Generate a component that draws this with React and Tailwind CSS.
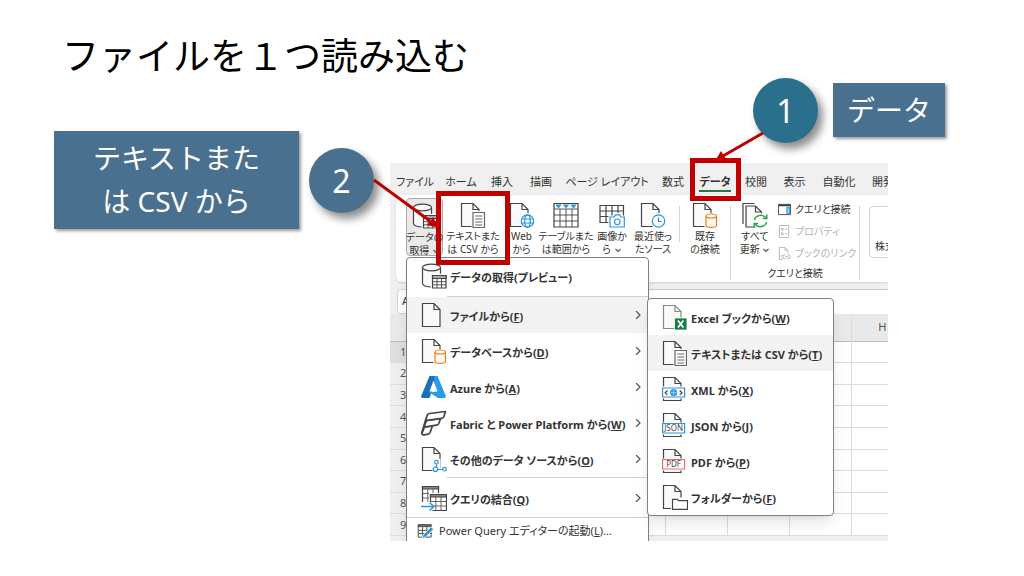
const tabs = ['ファイル', 'ホーム', '挿入', '描画', 'ページ レイアウト', '数式', 'データ', '校閲', '表示', '自動化', '開発'];
// columns behind the open menus carry no letter
const columns = ['', '', '', '', '', '', '', 'H'];
const rows = [1, 2, 3, 4, 5, 6, 7, 8, 9];

function Icon({ children, small }) {
  return (
    <svg
      viewBox="0 0 26 26"
      className={small ? 'size-4 shrink-0' : 'size-[26px] shrink-0'}
      fill="none"
      stroke="#444"
      strokeWidth="1.2"
      aria-hidden="true"
    >
      {children}
    </svg>
  );
}

function Page({ stroke = '#444' }) {
  return <path d="M1.500 1.500h11.500l6 6v17h-17.500zM13 1.500v6h6" fill="#fafafa" stroke={stroke} />;
}

function PageIcon() {
  return <Icon><Page /></Icon>;
}

function CylinderIcon() {
  return (
    <Icon>
      <path d="M1.500 4.500v16c0 2 4 3.500 9 3.500s9-1.500 9-3.500v-16" fill="#fafafa" />
      <ellipse cx="10.500" cy="4.500" rx="9" ry="3.300" fill="#fafafa" />
      <path d="M11.500 12.500h13.500v12.500h-13.500z" fill="#fff" stroke="#fff" strokeWidth="3.500" />
      <path d="M11.500 12.500h13.500v12.500h-13.500z" fill="#fff" />
      <path d="M11.500 12.500h13.500v3h-13.500z" fill="#aaa" />
      <path d="M16 15.500v9.500M20.500 15.500v9.500M11.500 18.700h13.500M11.500 21.800h13.500" strokeWidth=".9" />
    </Icon>
  );
}

function TextIcon() {
  return (
    <Icon>
      <Page />
      <path d="M13 10.500h11.500v15h-11.500z" fill="#fff" stroke="#fff" strokeWidth="3" />
      <path d="M13 10.500h11.500v15h-11.500z" fill="#fff" stroke="#666" />
      <path d="M15.300 14h7M15.300 17h7M15.300 20h7M15.300 23h7" stroke="#666" strokeWidth="1" />
    </Icon>
  );
}

function WebIcon() {
  return (
    <Icon>
      <Page />
      <circle cx="18.500" cy="19" r="7.500" fill="#fff" stroke="#fff" />
      <g stroke="#2b95dd">
        <circle cx="18.500" cy="19" r="6.200" fill="#fff" />
        <ellipse cx="18.500" cy="19" rx="2.800" ry="6.200" />
        <path d="M12.500 17h12M12.500 21h12" />
      </g>
    </Icon>
  );
}

function TableIcon() {
  return (
    <Icon>
      <path d="M1 1.500h24v23.500h-24z" fill="#fff" />
      <path d="M1 7h24M1 13h24M1 19h24M7 7v18M13 7v18M19 7v18" strokeWidth=".9" />
      <path d="M3.500 3h4l-2 2.500zM11 3h4l-2 2.500zM18.500 3h4l-2 2.500z" fill="#2b95dd" stroke="#2b95dd" />
    </Icon>
  );
}

function CameraIcon() {
  return (
    <Icon>
      <path d="M1 3.500h23.500v17h-23.500zM1 9h23.500M1 14.500h23.500M7 3.500v17M13 3.500v17M19 3.500v17" />
      <path d="M11 15h4l2-2.500h3l2 2.500h3.500v10.500h-14.500z" fill="#fff" stroke="#fff" strokeWidth="3" />
      <path d="M11 15h4l1.500-2.200h4l1.500 2.200h3.300v10h-14.300z" fill="#fff" stroke="#2b95dd" />
      <circle cx="18.300" cy="19.800" r="2.800" stroke="#2b95dd" />
    </Icon>
  );
}

function ClockIcon() {
  return (
    <Icon>
      <Page />
      <circle cx="18.500" cy="19" r="7.500" fill="#fff" stroke="#fff" />
      <circle cx="18.500" cy="19" r="6.200" fill="#fff" stroke="#2b95dd" />
      <path d="M18.500 15.500v4h3" stroke="#2b7cb8" />
    </Icon>
  );
}

function DatabaseIcon() {
  return (
    <Icon>
      <Page />
      <path d="M12.500 11h13v15h-13z" fill="#fff" stroke="none" />
      <path d="M14 14v9.500c0 2.500 10.500 2.500 10.500 0v-9.500" fill="#fff7ef" stroke="#e8811a" />
      <ellipse cx="19.250" cy="14" rx="5.250" ry="2" fill="#fff" stroke="#e8811a" />
    </Icon>
  );
}

function RefreshIcon() {
  return (
    <Icon>
      <path d="M1 22v-20.500h11.500" />
      <path d="M4 4h9.500l6 6v15h-15.500zM13.500 4v6h6" fill="#fafafa" />
      <circle cx="18.500" cy="19" r="8" fill="#fff" stroke="none" />
      <path d="M12.500 18c.8-5 8.500-6.500 11.500-1.800M24.800 12.500v4h-4M24.500 20c-.8 5-8.500 6.500-11.500 1.800M12.200 25.500v-4h4" stroke="#2ba84f" strokeWidth="1.500" />
    </Icon>
  );
}

function AzureIcon() {
  return (
    <Icon>
      <path d="M8.500 2h8l-8 22h-6.500q-2.500 0-1.700-2.200z" fill="#1c6fba" stroke="none" />
      <path d="M13 2h3.500l8.300 20q.6 2-1.500 2h-6.300l-9.500-6.300h7z" fill="#2a9be6" stroke="none" />
      <path d="M12.500 6.500l4 11h-8z" fill="#fff" stroke="none" />
    </Icon>
  );
}

function FabricIcon() {
  return (
    <Icon>
      <g strokeWidth="1.700" strokeLinejoin="round" fill="#fff">
        <path d="M3.500 17l8-1.200-2.300 6.500q-.6 1.500-2 1.800l-4.200.7q-2.500.2-2-1.700z" />
        <path d="M5.500 10.400l14-1.700-1.700 4.800q-.6 1.500-2.300 1.700l-12.500 2z" />
        <path d="M8.500 3.500l16-2-1.700 5.200q-.6 1.500-2.300 1.700l-16 2.200 1.600-5.200q.6-1.600 2.400-1.900z" />
        <path d="M4.500 10.600l-4 13" />
      </g>
    </Icon>
  );
}

function OtherSourcesIcon() {
  return (
    <Icon>
      <Page />
      <path d="M11.500 13h8v9h6v4h-14z" fill="#fff" stroke="none" />
      <g stroke="#2b95dd" fill="#fff">
        <path d="M15.500 18v3M17 23.500h5" />
        <circle cx="15.500" cy="16.200" r="1.800" />
        <circle cx="14.500" cy="23.200" r="2.200" />
        <circle cx="23.500" cy="23.200" r="1.800" />
      </g>
    </Icon>
  );
}

function CombineIcon() {
  return (
    <Icon>
      <path d="M1.500 1.500h16v16h-16z" fill="#fff" />
      <path d="M1.500 1.500h16v2.500h-16z" fill="#888" />
      <path d="M6.800 4v13M12 4v13M1.500 8.500h16M1.500 13h16" strokeWidth=".8" />
      <path d="M9.500 9.500h16v16h-16z" fill="#fff" stroke="#fff" strokeWidth="3" />
      <path d="M9.500 9.500h16v16h-16z" fill="#fff" />
      <path d="M9.500 9.500h16v2.500h-16z" fill="#888" />
      <path d="M14.800 12v13M20 12v13M9.500 16.500h16M9.500 21h16" strokeWidth=".8" />
      <path d="M0 17h12l2 4.500-3 4.500h-11z" fill="#fff" stroke="none" />
      <path d="M0 21.500h12.500M8.500 17.500l4.500 4-4.500 4" stroke="#2b95dd" strokeWidth="1.500" />
    </Icon>
  );
}

function QueryEditorIcon() {
  return (
    <Icon small>
      <path d="M2 3h21v20h-21zM2 12h21M2 17h21M9 7v16M16 7v16" strokeWidth="1.500" />
      <path d="M2 3h21v3h-21z" fill="#777" strokeWidth="1.500" />
      <path d="M8 26l2-7 13-13 4 4-13 13z" fill="#2b95dd" stroke="#fff" strokeWidth="1.500" />
    </Icon>
  );
}

function ExcelIcon() {
  return (
    <Icon>
      <Page stroke="#888" />
      <path d="M12.500 14h12.500v12h-12.500z" fill="#12803f" stroke="#fff" strokeWidth=".8" />
      <path d="M16 16.500l5.400 7M21.400 16.500l-5.400 7" stroke="#fff" strokeWidth="1.800" />
    </Icon>
  );
}

function XmlIcon() {
  return (
    <Icon>
      <Page />
      <path d="M0 10.500h22v12h-22z" fill="#fff" stroke="none" />
      <path d="M.6 12h22v9h-22z" fill="#fff" stroke="#2b95dd" />
      <path d="M5.500 14.500l-2.300 2.200 2.300 2.200M17.700 14.500l2.300 2.200-2.300 2.200" />
      <circle cx="11.600" cy="16.600" r="3" fill="#2b95dd" stroke="#2b95dd" />
      <path d="M8.600 16.600h6M11.600 13.600v6" stroke="#bfe0f7" strokeWidth=".7" />
    </Icon>
  );
}

function LabelledPage({ label, color }) {
  return (
    <Icon>
      <Page />
      <path d="M0 10.500h22v12h-22z" fill="#fff" stroke="none" />
      <path d="M.6 11.500h22v9.500h-22z" fill="#fff" stroke={color} />
      <text x="11.600" y="19.200" textAnchor="middle" fontSize="8" fill="#444" stroke="none" className="font-['Noto_Sans',sans-serif] font-normal">
        {label}
      </text>
    </Icon>
  );
}

function FolderIcon() {
  return (
    <Icon>
      <Page />
      <path d="M9 13.500h17v12.500h-17z" fill="#fff" stroke="none" />
      <path d="M10.500 25.400v-10h5l1 1.300h9v8.700z" fill="#fff" />
    </Icon>
  );
}

function Chevron({ down }) {
  return (
    <svg viewBox="0 0 8 8" className="inline size-2 shrink-0" fill="none" stroke="#555" strokeWidth="1.200" aria-hidden="true">
      <path d={down ? 'M1.500 3l2.500 2.500 2.500-2.500' : 'M2 0l4 4-4 4'} />
    </svg>
  );
}

function RibbonButton({ icon, lines, arrow, className }) {
  return (
    <button type="button" className={`flex shrink-0 flex-col items-center gap-[2px] whitespace-nowrap pt-1 leading-[13px] ${className}`}>
      {icon}
      <span>
        {lines[0]}
        <br />
        {lines[1]}
        {arrow && <> <Chevron down /></>}
      </span>
    </button>
  );
}

function SideCommand({ label, disabled, children }) {
  return (
    <button type="button" disabled={disabled} className="flex h-[22px] items-center gap-1 whitespace-nowrap disabled:text-[#b4b4b4]">
      <svg viewBox="0 0 14 14" className="size-[13px] shrink-0" fill="none" stroke={disabled ? '#b4b4b4' : '#444'} aria-hidden="true">
        {children}
      </svg>
      {label}
    </button>
  );
}

function MenuItem({ icon, label, accessKey, active, arrow }) {
  return (
    <button
      type="button"
      role="menuitem"
      className={`flex h-9 w-full items-center gap-[3px] whitespace-nowrap pl-[14px] pr-[6px] font-bold ${active ? 'bg-[#f3f3f3]' : ''}`}
    >
      {icon}
      <span className="grow pt-1 text-left">
        {label}
        {accessKey && <>(<u>{accessKey}</u>)</>}
      </span>
      {arrow && <Chevron />}
    </button>
  );
}

function Separator({ className = '' }) {
  return <span className={`w-px shrink-0 bg-[#d4d4d4] ${className}`} />;
}

function Ribbon() {
  return (
    <div className="ml-[6px] flex h-[87px] items-start rounded-bl-md bg-white pl-[10px] pt-[3px] text-[10px] shadow-sm">
      <RibbonButton className="h-[58px] w-[37px] rounded-sm border border-[#aaa] bg-[#e9e9e9]" icon={<CylinderIcon />} lines={['データの', '取得']} arrow />
      <RibbonButton className="w-[60px]" icon={<TextIcon />} lines={['テキストまた', 'は CSV から']} />
      <RibbonButton className="w-[37px]" icon={<WebIcon />} lines={['Web', 'から']} />
      <RibbonButton className="w-[52px]" icon={<TableIcon />} lines={['テーブルまた', 'は範囲から']} />
      <RibbonButton className="w-10" icon={<CameraIcon />} lines={['画像か', 'ら']} arrow />
      <RibbonButton className="w-[42px]" icon={<ClockIcon />} lines={['最近使っ', 'たソース']} />
      <Separator className="mx-[5px] mt-2 h-9" />
      <RibbonButton className="w-10" icon={<DatabaseIcon />} lines={['既存', 'の接続']} />
      <Separator className="mx-[5px] mt-2 h-[74px]" />
      <div className="w-[118px] shrink-0">
        <div className="flex gap-1">
          <RibbonButton className="w-[38px]" icon={<RefreshIcon />} lines={['すべて', '更新']} arrow />
          <div>
            <SideCommand label="クエリと接続">
              <path d="M.5 1.500h13v11h-13z" />
              <path d="M.5 2.500h13" strokeWidth="2" />
              <path d="M9.500 4.500h3v7h-3z" fill="#8ecbf3" stroke="#2b95dd" />
            </SideCommand>
            <SideCommand label="プロパティ" disabled>
              <path d="M1.500.5h10v13h-10zM3.500 3.500h2v2h-2zM3.500 8.500h2v2h-2zM7.500 4.500h2.500M7.500 9.500h2.500" />
            </SideCommand>
            <SideCommand label="ブックのリンク" disabled>
              <path d="M5 13.500h-3.500v-13h6l3 3v3M7.500.5v3h3" />
              <path d="M3 9.500h3M8 8.500h-1a2 2 0 0 0 0 4h1M10 8.500h1.500a2 2 0 0 1 0 4h-1.500M7.500 10.500h4" />
            </SideCommand>
          </div>
        </div>
        <p className="text-center leading-[18px]">クエリと接続</p>
      </div>
      <Separator className="mx-[5px] mt-2 h-[74px]" />
      <button type="button" className="ml-1 mt-2 flex h-[52px] w-24 shrink-0 items-end rounded-sm border border-[#d4d4d4] pb-1 pl-[5px] leading-[14px]">
        株式
      </button>
    </div>
  );
}

function Sheet() {
  return (
    <table className="h-[222px] w-[523px] table-fixed border-collapse text-[11px] leading-4 text-[#555]">
      <colgroup>
        <col className="w-[27px]" />
        {columns.map((name, i) => <col key={i} className="w-[62px]" />)}
      </colgroup>
      <thead>
        <tr className="h-[27px] border-b border-[#bbb] bg-[#e9e9e9]">
          <th />
          {columns.map((name, i) => (
            <th key={i} className="border-l border-[#ddd] p-0 font-normal">{name}</th>
          ))}
        </tr>
      </thead>
      <tbody>
        {rows.map((row) => (
          <tr key={row} className="border-b border-[#dcdcdc]">
            <th className={row === 1 ? 'bg-[#dedede] p-0 font-normal text-[#227447]' : 'bg-[#efefef] p-0 font-normal'}>{row}</th>
            {columns.map((name, i) => <td key={i} className="border-l border-[#dcdcdc] p-0" />)}
          </tr>
        ))}
      </tbody>
    </table>
  );
}

function DataMenu() {
  return (
    <div role="menu" className="absolute left-4 top-[94px] w-[243px] rounded-t border border-[#808080] bg-white text-[11px] shadow-lg">
      <div className="pb-[2px]">
        <MenuItem icon={<CylinderIcon />} label="データの取得(プレビュー)" />
      </div>
      <hr className="ml-10 border-[#d0d0d0]" />
      <MenuItem icon={<PageIcon />} label="ファイルから" accessKey="F" active arrow />
      <MenuItem icon={<DatabaseIcon />} label="データベースから" accessKey="D" arrow />
      <MenuItem icon={<AzureIcon />} label="Azure から" accessKey="A" arrow />
      <MenuItem icon={<FabricIcon />} label="Fabric と Power Platform から" accessKey="W" arrow />
      <MenuItem icon={<OtherSourcesIcon />} label="その他のデータ ソースから" accessKey="O" arrow />
      <hr className="ml-10 border-[#d0d0d0]" />
      <div className="pb-px pt-[2px]">
        <MenuItem icon={<CombineIcon />} label="クエリの結合" accessKey="Q" arrow />
      </div>
      <hr className="border-[#d0d0d0]" />
      <button type="button" role="menuitem" className="flex h-[26px] items-center gap-[6px] whitespace-nowrap pl-[10px]">
        <QueryEditorIcon />
        <span>Power Query エディターの起動(<u>L</u>)...</span>
      </button>
    </div>
  );
}

function FileMenu() {
  return (
    <div role="menu" className="absolute left-[257px] top-[135px] w-[187px] rounded border border-[#808080] bg-white text-[11px] shadow-lg">
      <MenuItem icon={<ExcelIcon />} label="Excel ブックから" accessKey="W" />
      <MenuItem icon={<TextIcon />} label="テキストまたは CSV から" accessKey="T" active />
      <MenuItem icon={<XmlIcon />} label="XML から" accessKey="X" />
      <MenuItem icon={<LabelledPage label="JSON" color="#2b95dd" />} label="JSON から" accessKey="J" />
      <MenuItem icon={<LabelledPage label="PDF" color="#f06a6a" />} label="PDF から" accessKey="P" />
      <MenuItem icon={<FolderIcon />} label="フォルダーから" accessKey="F" />
    </div>
  );
}

function ExcelWindow() {
  return (
    <section className="relative mr-[136px] h-[378px] overflow-hidden bg-[#f0f0f0] font-['Noto_Sans','Noto_Sans_CJK_JP',sans-serif] text-[#333] [font-feature-settings:'palt']">
      <nav className="grid h-8 grid-cols-[32px_28px_22px_24px_76px_24px_28px_22px_23px_34px_22px] items-center justify-items-center gap-4 whitespace-nowrap pl-[9px] pt-2 text-[11px] leading-4">
        {tabs.map((tab) => (
          <button key={tab} type="button" className={tab === 'データ' ? 'border-b-2 border-[#1c7c45] font-bold' : 'border-b-2 border-transparent'}>
            {tab}
          </button>
        ))}
      </nav>
      <Ribbon />
      <div className="mt-[7px] flex h-[25px] gap-2 pl-[7px]">
        <input aria-label="名前ボックス" defaultValue="A1" className="w-20 rounded border border-[#d4d4d4] bg-white pl-1 text-[11px]" />
        <input aria-label="数式バー" className="grow border-t border-[#c8c8c8] bg-white" />
      </div>
      <div className="bg-white">
        <Sheet />
      </div>
      <DataMenu />
      <FileMenu />
    </section>
  );
}

function Step({ number, className }) {
  return (
    <span className={`flex size-[65px] shrink-0 items-center justify-center rounded-full text-[32px] text-white shadow-[5px_6px_8px_rgba(0,0,0,0.45)] ${className}`}>
      {number}
    </span>
  );
}

function Marks() {
  return (
    <>
      <div className="absolute left-[300px] top-[80px] h-[43px] w-[51px] border-5 border-[#c00000]" />
      <div className="absolute left-[46px] top-[113px] h-[74px] w-[74px] border-5 border-[#c00000]" />
      <svg className="absolute left-0 top-0 h-[200px] w-[400px] overflow-visible" fill="#c00000" stroke="#c00000" strokeWidth="3" aria-hidden="true">
        <path d="M373 55l-40 23M-16 102l56 41" />
        <path d="M325 83l6-10 5 8zM49 150l-12-3 6-8z" stroke="none" />
      </svg>
    </>
  );
}

export default function App() {
  return (
    <main className="min-h-screen overflow-hidden bg-white font-['Noto_Sans','Noto_Sans_CJK_JP',sans-serif]">
      <h1 className="flex h-[78px] items-end pb-1 pl-[62px] font-['Noto_Sans_CJK_JP',sans-serif] text-[37px] leading-10 text-black">
        ファイルを１つ読み込む
      </h1>
      <div className="grid grid-cols-[390px_1fr]">
        <div className="flex items-start gap-[10px] pl-[54px] pt-[53px]">
          <p className="w-[245px] bg-[#4a708f] py-[6px] text-center text-[28px] leading-[43px] text-white shadow-[2px_2px_3px_rgba(0,0,0,0.4)]">
            テキストまた
            <br />
            は CSV から
          </p>
          <Step number="2" className="mt-[17px] bg-[#4a708f]" />
        </div>
        <div className="relative min-w-0">
          <div className="mb-5 flex items-start gap-[15px] pl-[363px]">
            <Step number="1" className="bg-[#2a708c]" />
            <p className="mt-[5px] w-28 bg-[#4a708f] text-center text-[28px] leading-[54px] text-white shadow-[2px_2px_3px_rgba(0,0,0,0.4)]">
              データ
            </p>
          </div>
          <ExcelWindow />
          <Marks />
        </div>
      </div>
    </main>
  );
}
